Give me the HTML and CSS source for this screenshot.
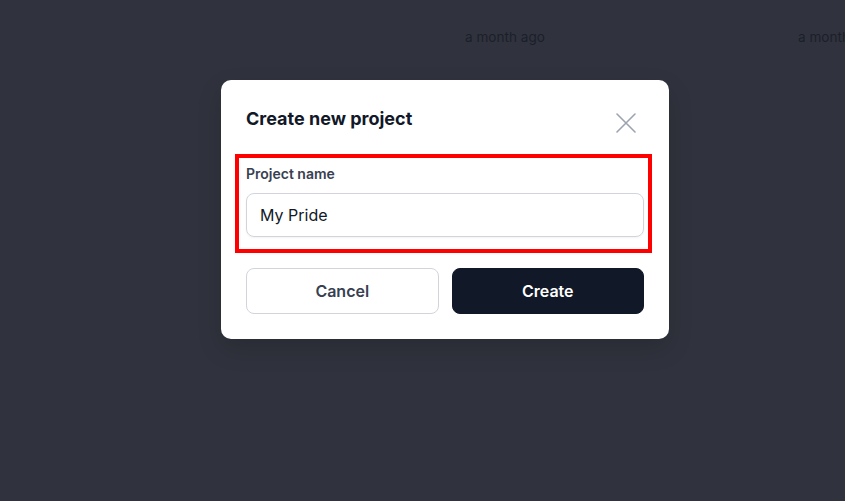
FILE: index.html
```html
<!DOCTYPE html>
<html>
<head>
<meta charset="utf-8">
<link rel="stylesheet" href="styles.css">
</head>
<body>
<div class="page">
  <div class="bg-row">
    <span class="bg-time t1">a month ago</span>
    <span class="bg-time t2">a month ago</span>
  </div>
  <div class="modal">
    <div class="modal-head">
      <h2 class="modal-title">Create new project</h2>
      <button class="close-btn" aria-label="Close">
        <svg width="20" height="20" viewBox="0 0 20 20" fill="none" stroke="#9ca3af" stroke-width="1.6" stroke-linecap="round"><path d="M1 1L19 19M19 1L1 19"/></svg>
      </button>
    </div>
    <div class="field">
      <label class="field-label">Project name</label>
      <div class="input">My Pride</div>
      <div class="highlight"></div>
    </div>
    <div class="actions">
      <button class="btn btn-cancel">Cancel</button>
      <button class="btn btn-create">Create</button>
    </div>
  </div>
</div>
</body>
</html>
```
FILE: styles.css
```css
* { box-sizing: border-box; }
html, body { margin: 0; padding: 0; }
body {
  background: #30333d;
  font-family: Inter, "Noto Sans", sans-serif;
  width: 845px;
  height: 501px;
  overflow: hidden;
}
.page {
  position: relative;
  width: 845px;
  height: 501px;
}
.bg-row {
  display: flex;
  padding: 28px 0 0 465px;
  white-space: nowrap;
}
.bg-time {
  font-size: 13.6px;
  line-height: 18px;
  color: #1b1f2a;
}
.t2 { margin-left: 253px; }
.modal {
  position: absolute;
  left: 221px;
  top: 80px;
  width: 448px;
  background: #fff;
  border-radius: 10px;
  padding: 25px 25px 25px 25px;
  box-shadow: 0 10px 25px rgba(0,0,0,0.15);
}
.modal-head {
  display: flex;
  justify-content: space-between;
  align-items: center;
  height: 28px;
}
.modal-title {
  margin: 0;
  font-size: 18px;
  line-height: 28px;
  font-weight: 700;
  color: #111827;
}
.close-btn {
  border: 0;
  background: none;
  padding: 0;
  margin-right: 8px;
  margin-top: 8px;
  width: 20px;
  height: 20px;
  display: flex;
}
.field {
  position: relative;
  margin-top: 31px;
  display: flex;
  flex-direction: column;
}
.field-label {
  font-size: 14px;
  line-height: 20px;
  font-weight: 600;
  color: #374151;
}
.input {
  margin-top: 9px;
  height: 44px;
  border: 1px solid #d1d5db;
  border-radius: 8px;
  padding: 0 13px;
  display: flex;
  align-items: center;
  font-size: 16px;
  color: #111827;
  box-shadow: 0 1px 2px rgba(0,0,0,0.05);
}
.highlight {
  position: absolute;
  left: -11px;
  right: -8px;
  top: -10px;
  bottom: -16px;
  border: 4px solid #ff0000;
  pointer-events: none;
}
.actions {
  display: flex;
  gap: 13px;
  margin-top: 31px;
}
.btn {
  flex: 1;
  height: 46px;
  border-radius: 8px;
  font-family: Inter, "Noto Sans", sans-serif;
  font-size: 16px;
  font-weight: 600;
}
.btn-cancel {
  background: #fff;
  border: 1px solid #d1d5db;
  color: #374151;
}
.btn-create {
  background: #111827;
  border: 1px solid #111827;
  color: #fff;
}
```
